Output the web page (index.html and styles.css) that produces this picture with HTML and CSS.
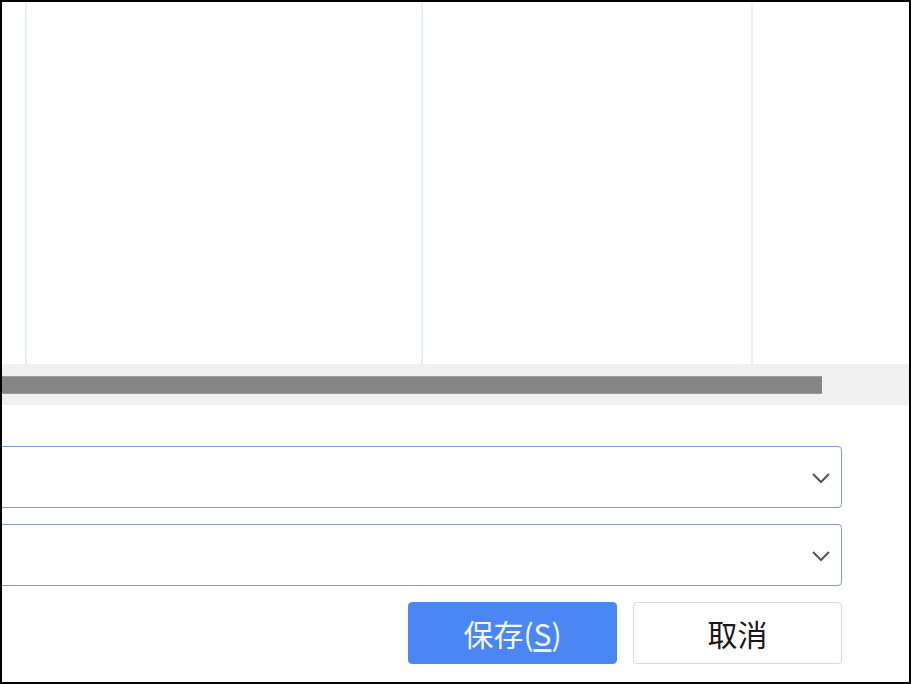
FILE: index.html
```html
<!DOCTYPE html>
<html lang="zh">
<head>
<meta charset="utf-8">
<link rel="stylesheet" href="styles.css">
</head>
<body>
<div class="frame">
  <div class="grid">
    <div class="col col-a"></div>
    <div class="col col-b"></div>
    <div class="col col-c"></div>
    <div class="col col-d"></div>
  </div>
  <div class="hscroll"><div class="thumb"></div></div>
  <div class="form">
    <div class="select"><svg class="chev" viewBox="0 0 20 12" width="20" height="12"><path d="M2 2 L10 10 L18 2" fill="none" stroke="#555" stroke-width="2"/></svg></div>
    <div class="select"><svg class="chev" viewBox="0 0 20 12" width="20" height="12"><path d="M2 2 L10 10 L18 2" fill="none" stroke="#555" stroke-width="2"/></svg></div>
    <div class="actions">
      <button class="btn btn-primary">保存(<u>S</u>)</button>
      <button class="btn btn-default">取消</button>
    </div>
  </div>
</div>
</body>
</html>
```
FILE: styles.css
```css
html, body {
  margin: 0;
  padding: 0;
  background: #fff;
}
.frame {
  width: 911px;
  height: 684px;
  box-sizing: border-box;
  border: 2px solid #000;
  overflow: hidden;
  background: #fff;
  font-family: "Noto Sans CJK SC", "Noto Sans", sans-serif;
}
.grid {
  display: flex;
  height: 362px;
}
.col {
  height: 100%;
  box-sizing: border-box;
  border-right: 2px solid #e6f0fa;
  flex: none;
}
.col-a { width: 25px; }
.col-b { width: 396px; }
.col-c { width: 330px; }
.col-d { width: 158px; border-right: none; }
.hscroll {
  height: 41px;
  background: #f0f0f0;
  padding-top: 12px;
  box-sizing: border-box;
}
.thumb {
  width: 820px;
  height: 18px;
  background: #858585;
  border-top: 1px solid #9a9a9a;
  border-bottom: 1px solid #9a9a9a;
  box-sizing: border-box;
}
.form {
  padding-top: 41px;
  padding-right: 67px;
  display: flex;
  flex-direction: column;
  gap: 16px;
}
.select {
  margin-left: -6px;
  height: 62px;
  box-sizing: border-box;
  border: 1px solid #7d9ace;
  border-radius: 4px;
  display: flex;
  align-items: center;
  justify-content: flex-end;
  padding-right: 10px;
}
.chev {
  display: block;
  margin-top: 2px;
}
.actions {
  display: flex;
  justify-content: flex-end;
  gap: 16px;
}
.btn {
  width: 209px;
  height: 62px;
  box-sizing: border-box;
  border-radius: 4px;
  font-family: "Noto Sans CJK SC", "Noto Sans", sans-serif;
  font-size: 30px;
  line-height: 1;
  padding: 0;
  cursor: pointer;
}
.btn u {
  text-underline-offset: 3px;
}
.btn-primary {
  background: #4b86f5;
  border: 1px solid #4b86f5;
  color: #f4f7ff;
}
.btn-default {
  background: #fff;
  border: 1px solid #d9d9d9;
  color: #1a1a1a;
}
```
